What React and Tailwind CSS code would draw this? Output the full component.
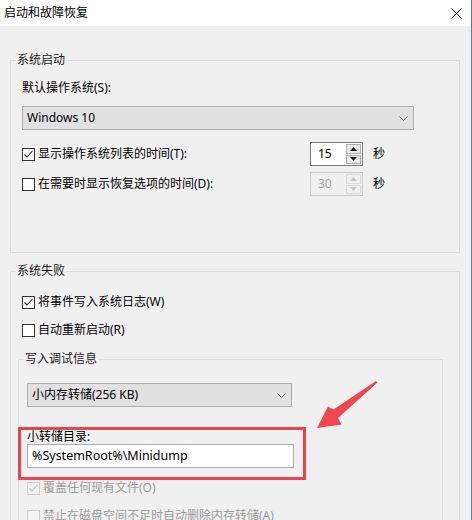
import React from "react";

const FONT = "font-['Noto_Sans','Noto_Sans_CJK_SC',sans-serif]";

function CheckBox({ checked, disabled }) {
  return (
    <span
      className={
        "flex h-[13px] w-[13px] shrink-0 items-center justify-center border " +
        (disabled ? "border-[#cccccc] bg-[#f3f3f3]" : "border-[#333333] bg-white")
      }
    >
      {checked && (
        <svg width="11" height="11" viewBox="0 0 11 11">
          <polyline
            points="1.5,5.5 4,8 9.5,2"
            fill="none"
            stroke={disabled ? "#bcbcbc" : "#222222"}
            strokeWidth="1.1"
          />
        </svg>
      )}
    </span>
  );
}

function CheckRow({ checked, disabled, children, className = "" }) {
  return (
    <div className={"flex h-[20px] items-center " + className}>
      <CheckBox checked={checked} disabled={disabled} />
      <span
        className={
          "ml-[3px] leading-[16px] " + (disabled ? "text-[#9d9d9d]" : "text-black")
        }
      >
        {children}
      </span>
    </div>
  );
}

function Chevron() {
  return (
    <svg width="9" height="5" viewBox="0 0 9 5">
      <polyline points="0.5,0.5 4.5,4.5 8.5,0.5" fill="none" stroke="#5f5f5f" strokeWidth="1" />
    </svg>
  );
}

function Select({ value, className = "" }) {
  return (
    <div
      className={
        "flex h-[24px] items-center justify-between border border-[#adadad] bg-[#e1e1e1] pl-[4px] pr-[5px] " +
        className
      }
    >
      <span className="leading-[16px] text-black">{value}</span>
      <Chevron />
    </div>
  );
}

function Triangle({ up, color }) {
  return (
    <svg width="7" height="4" viewBox="0 0 7 4">
      <polygon points={up ? "3.5,0 7,4 0,4" : "0,0 7,0 3.5,4"} fill={color} />
    </svg>
  );
}

function SpinBox({ value, disabled }) {
  return (
    <div
      className={
        "flex h-[24px] w-[53px] border " +
        (disabled ? "border-[#cccccc] bg-[#f0f0f0]" : "border-[#7a7a7a] bg-white")
      }
    >
      <span
        className={
          "flex flex-1 items-center pl-[7px] leading-[16px] " +
          (disabled ? "text-[#a3a3a3]" : "text-black")
        }
      >
        {value}
      </span>
      <div className="flex w-[16px] flex-col gap-px py-px pr-px">
        <span
          className={
            "flex flex-1 items-center justify-center border " +
            (disabled ? "border-[#d9d9d9] bg-[#f0f0f0]" : "border-[#acacac] bg-[#eaeaea]")
          }
        >
          <Triangle up color={disabled ? "#c4c4c4" : "#1a1a1a"} />
        </span>
        <span
          className={
            "flex flex-1 items-center justify-center border " +
            (disabled ? "border-[#d9d9d9] bg-[#f0f0f0]" : "border-[#acacac] bg-[#eaeaea]")
          }
        >
          <Triangle color={disabled ? "#c4c4c4" : "#1a1a1a"} />
        </span>
      </div>
    </div>
  );
}

function TimeRow({ checked, label, value, disabled, className = "" }) {
  return (
    <div className={"grid h-[24px] grid-cols-[288px_53px_auto] items-center " + className}>
      <CheckRow checked={checked}>{label}</CheckRow>
      <SpinBox value={value} disabled={disabled} />
      <span className="ml-[10px] leading-[16px] text-black">秒</span>
    </div>
  );
}

export default function App() {
  return (
    <div
      className={
        "relative h-[520px] w-[472px] overflow-hidden border-r border-[#3f83c7] bg-[#f0f0f0] text-[12px] " +
        FONT
      }
    >
      <div className="flex h-[26px] items-center justify-between bg-white pl-[4px] pr-[9px]">
        <span className="leading-[16px] text-black">启动和故障恢复</span>
        <svg width="11" height="11" viewBox="0 0 11 11">
          <path d="M0.5 0.5 L10.5 10.5 M10.5 0.5 L0.5 10.5" stroke="#111111" strokeWidth="1" />
        </svg>
      </div>

      <div className="pl-[10px] pr-[11px]">
        <fieldset className="mt-[26px] border border-[#dcdcdc] pb-[56px] pl-[5px] pr-[11px]">
          <legend className="px-[1px] leading-[16px] text-[#1a1a1a]">系统启动</legend>
          <div className="pl-[6px]">
            <div className="mt-[12px] leading-[16px] text-black">默认操作系统(S):</div>
            <Select value="Windows 10" className="mt-[10px] w-[392px]" />
            <TimeRow className="mt-[12px]" checked label="显示操作系统列表的时间(T):" value="15" />
            <TimeRow
              className="mt-[6px]"
              label="在需要时显示恢复选项的时间(D):"
              value="30"
              disabled
            />
          </div>
        </fieldset>

        <fieldset className="mt-[10px] border border-[#dcdcdc] pb-[40px] pl-[5px] pr-[16px]">
          <legend className="px-[1px] leading-[16px] text-[#1a1a1a]">系统失败</legend>
          <CheckRow checked className="mt-[13px] pl-[6px]">
            将事件写入系统日志(W)
          </CheckRow>
          <CheckRow className="mt-[8px] pl-[6px]">自动重新启动(R)</CheckRow>

          <fieldset className="ml-[2px] mt-[11px] border border-[#dcdcdc] pb-[40px] pl-[5px]">
            <legend className="px-[1px] leading-[16px] text-[#1a1a1a]">写入调试信息</legend>
            <div className="pl-[3px]">
              <Select value="小内存转储(256 KB)" className="mt-[16px] w-[265px]" />
              <div className="mt-[23px] leading-[14px] text-black">小转储目录:</div>
              <div className="flex h-[24px] w-[267px] items-center border border-[#adadad] bg-white pl-[4px] text-[12.5px] leading-[16px] text-black">
                %SystemRoot%\Minidump
              </div>
              <CheckRow checked disabled className="mt-[10px]">
                覆盖任何现有文件(O)
              </CheckRow>
              <CheckRow disabled className="mt-[8px]">
                禁止在磁盘空间不足时自动删除内存转储(A)
              </CheckRow>
            </div>
          </fieldset>
        </fieldset>
      </div>

      <div className="pointer-events-none absolute left-[18px] top-[427px] h-[53px] w-[288px] border-[3px] border-[#e9454f]" />
      <svg
        className="pointer-events-none absolute left-0 top-0"
        width="472"
        height="520"
        viewBox="0 0 472 520"
      >
        <polygon
          points="317,428 328,406.5 333.5,409.5 376,381 377.5,382.5 338,418 341.5,424.5"
          fill="#f0464f"
        />
      </svg>
    </div>
  );
}
